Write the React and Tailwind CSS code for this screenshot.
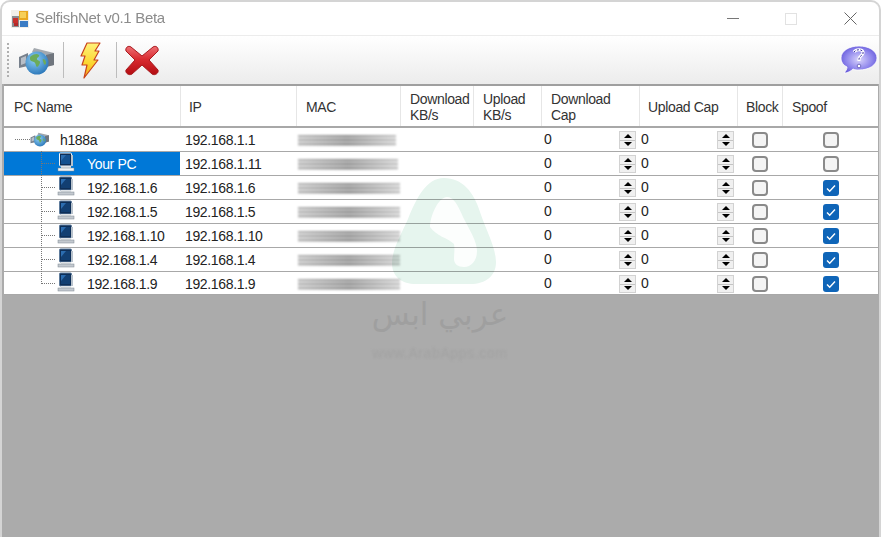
const columns = "grid grid-cols-[176px_116px_104px_73px_68px_98px_98px_45px_1fr]";

const devices = [
  { name: "Your PC", ip: "192.168.1.11", mac: "w-[100px]", spoof: false, selected: true },
  { name: "192.168.1.6", ip: "192.168.1.6", mac: "w-[102px]", spoof: true },
  { name: "192.168.1.5", ip: "192.168.1.5", mac: "w-[104px]", spoof: true },
  { name: "192.168.1.10", ip: "192.168.1.10", mac: "w-[104px]", spoof: true },
  { name: "192.168.1.4", ip: "192.168.1.4", mac: "w-[105px]", spoof: true },
  { name: "192.168.1.9", ip: "192.168.1.9", mac: "w-[106px]", spoof: true, last: true },
];

function AppIcon() {
  return (
    <svg width="18" height="18" viewBox="0 0 18 18" className="shrink-0">
      <rect x="0" y="0" width="18" height="18" fill="#f2efe9" />
      <rect x="1" y="6" width="7" height="11" fill="#8a8d92" />
      <rect x="2" y="8" width="5" height="5" fill="#c9302c" />
      <rect x="3" y="13" width="4" height="3" fill="#b32a2a" />
      <rect x="8" y="1" width="9" height="9" fill="#e9a820" />
      <rect x="9" y="2" width="6" height="6" fill="#f6cf58" />
      <rect x="9" y="11" width="8" height="6" fill="#3b7cc4" />
    </svg>
  );
}

function GlobeIcon({ size = 38, height = 28 }) {
  return (
    <svg width={size} height={height} viewBox="0 0 38 28" className="shrink-0">
      <defs>
        <radialGradient id="sea" cx="0.4" cy="0.35" r="0.8">
          <stop offset="0" stopColor="#8fd0f5" />
          <stop offset="1" stopColor="#1a68b0" />
        </radialGradient>
      </defs>
      <path d="M1 10l9-4v13l-9 2z" fill="#77808c" />
      <path d="M3 11l5-2v7l-5 2z" fill="#b7bec7" />
      <path d="M16 1l20 5v12l-8 2V8L14 5z" fill="#a3a8ae" />
      <path d="M28 8l8-2v12l-8 2z" fill="#6f757d" />
      <circle cx="19" cy="16" r="11.5" fill="url(#sea)" />
      <path d="M13 9c3-2 6-3 8-1 1 2-2 2-2 4s3 1 3 3-2 5-3 5-1-4-3-5-4-1-4-3 0-2 1-3z" fill="#6cab5a" />
      <path d="M25 12c2 0 3 2 3 4s-2 2-2 1-2-4-1-5z" fill="#6cab5a" />
    </svg>
  );
}

function BoltIcon() {
  return (
    <svg width="21" height="37" viewBox="0 0 21 37" className="shrink-0">
      <defs>
        <linearGradient id="bolt" x1="0" y1="0" x2="0" y2="1">
          <stop offset="0" stopColor="#fff27a" />
          <stop offset="0.6" stopColor="#fbd52e" />
          <stop offset="1" stopColor="#f6a11c" />
        </linearGradient>
      </defs>
      <path d="M7 1h13l-5 8 4 0-5 9 4 0L4 36l3-13-5 0 3-9-4 0z" fill="url(#bolt)" stroke="#c8431c" strokeWidth="1.2" strokeLinejoin="round" />
    </svg>
  );
}

function CloseIcon() {
  return (
    <svg width="36" height="36" viewBox="0 0 36 36" className="shrink-0">
      <defs>
        <linearGradient id="cross" x1="0" y1="0" x2="0" y2="1">
          <stop offset="0" stopColor="#ee6f74" />
          <stop offset="0.45" stopColor="#d92b30" />
          <stop offset="1" stopColor="#b30d12" />
        </linearGradient>
      </defs>
      <path d="M7 5l11 9 11-9c3-2 6 1 5 4l-9 9 9 10c1 3-3 6-6 4l-10-9-10 9c-3 2-7-1-6-4l9-10-9-9C1 6 4 3 7 5z" fill="url(#cross)" stroke="#a81a1e" strokeWidth="1" />
    </svg>
  );
}

function HelpIcon() {
  return (
    <svg width="38" height="30" viewBox="0 0 38 30" className="shrink-0">
      <defs>
        <radialGradient id="bubble" cx="0.5" cy="0.5" r="0.6">
          <stop offset="0" stopColor="#d9d4fb" />
          <stop offset="0.6" stopColor="#8f86ec" />
          <stop offset="1" stopColor="#5d50d6" />
        </radialGradient>
      </defs>
      <path d="M19 1c10 0 18 5 18 12s-8 12-18 12c-2 0-4 0-6-1-2 2-5 4-9 4 2-2 3-4 3-6-4-2-6-5-6-9C1 6 9 1 19 1z" fill="url(#bubble)" stroke="#fff" strokeWidth="0.8" />
      <path d="M14 7c2-3 8-3 9 0 1 3-4 4-4 7v2" fill="none" stroke="#fff" strokeWidth="3" />
      <path d="M14 7c2-3 8-3 9 0 1 3-4 4-4 7v2" fill="none" stroke="#3b2f9c" strokeWidth="1" strokeDasharray="2 1.5" />
      <circle cx="19" cy="21" r="1.8" fill="#fff" stroke="#3b2f9c" strokeWidth="0.6" />
    </svg>
  );
}

function PcIcon({ selected }) {
  return (
    <svg width="18" height="20" viewBox="0 0 18 20" className="shrink-0">
      <rect x="2.5" y="1" width="12" height="13" rx="1" fill="#0e2f58" stroke={selected ? "#f1f5fa" : "#5f7c9c"} />
      <rect x="4" y="3" width="9" height="9" fill={selected ? "#14508f" : "#123f72"} />
      <path d="M4 3h5L4 9z" fill="#2c6db0" />
      <rect x="14" y="3" width="2" height="11" fill="#b8c2cc" />
      <rect x="4" y="14" width="10" height="2" fill="#dfe3e7" />
      <rect x="1" y="16" width="16" height="3" fill={selected ? "#f1f4f7" : "#c3c9cf"} stroke="#7d8790" strokeWidth="0.5" />
    </svg>
  );
}

function Spinner() {
  return (
    <div className="flex h-[18px] w-[17px] shrink-0 flex-col justify-center gap-px border border-[#d2d2d2] bg-[#c4c4c4]">
      <div className="flex h-2 items-center justify-center bg-[#f0f0f0]">
        <div className="h-0 w-0 border-x-[4px] border-b-[4px] border-x-transparent border-b-black" />
      </div>
      <div className="flex h-2 items-center justify-center bg-[#f0f0f0]">
        <div className="h-0 w-0 border-x-[4px] border-t-[4px] border-x-transparent border-t-black" />
      </div>
    </div>
  );
}

function CapCell({ padLeft }) {
  return (
    <div className={"flex h-full items-start justify-between pr-[3px] " + padLeft}>
      <span className="mt-[2px] leading-[18px]">0</span>
      <div className="mt-[3px]">
        <Spinner />
      </div>
    </div>
  );
}

function Check({ checked }) {
  if (checked) {
    return (
      <div className="flex h-4 w-4 items-center justify-center rounded-[3px] bg-[#0f65b8]">
        <svg width="12" height="12" viewBox="0 0 12 12">
          <path d="M2 6.5l2.7 2.7L10 3.5" fill="none" stroke="#fff" strokeWidth="1.4" />
        </svg>
      </div>
    );
  }
  return <div className="h-4 w-4 rounded-[4px] border-2 border-[#8a8a8a] bg-[#f4f4f4]" />;
}

function BoxCell({ checked, className = "" }) {
  return (
    <div className={"flex h-full items-center justify-center pt-px " + className}>
      <Check checked={checked} />
    </div>
  );
}

function HeaderCell({ children, className = "" }) {
  return (
    <div className={"flex h-full items-center border-l border-[#e6e6e6] pt-[2px] leading-[16px] " + className}>
      {children}
    </div>
  );
}

function MacBlur({ width }) {
  return (
    <div className={"h-[11px] bg-gradient-to-r from-[#d6d6d6] via-[#a8a8a8] to-[#e4e4e4] blur-[1px] " + width}>
      <div className="h-full bg-[repeating-linear-gradient(180deg,#00000028_0px,#00000028_2px,#ffffff40_2px,#ffffff40_4px)]" />
    </div>
  );
}

function DeviceRow({ device }) {
  const { name, ip, mac, spoof, selected, last } = device;
  return (
    <div className={columns + " items-stretch border-b border-[#a8a8a8] text-[#222] " + (last ? "h-[23px]" : "h-6")}>
      <div className={"relative flex items-center pl-[53px] " + (selected ? "bg-[#0078d7] text-white" : "")}>
        <div className={"absolute left-[37px] top-[-1px] w-0 border-l border-dotted border-[#777] " + (last ? "h-[13px]" : "h-[25px]")} />
        <div className="absolute left-[37px] top-[11px] h-0 w-[14px] border-t border-dotted border-[#777]" />
        <div className="mb-[3px]">
          <PcIcon selected={selected} />
        </div>
        <span className="ml-[12px] pt-px">{name}</span>
      </div>
      <div className="flex items-center pl-[5px] pt-px">{ip}</div>
      <div className="flex items-center pl-[2px] pt-[2px]">
        <MacBlur width={mac} />
      </div>
      <div />
      <div />
      <CapCell padLeft="pl-[3px]" />
      <CapCell padLeft="pl-[2px]" />
      <BoxCell checked={false} />
      <BoxCell checked={spoof} className="pl-[2px]" />
    </div>
  );
}

function RootRow() {
  return (
    <div className={columns + " h-6 items-stretch border-b border-[#a8a8a8] text-[#222]"}>
      <div className="flex items-center pl-[11px]">
        <div className="h-0 w-[15px] shrink-0 border-t border-dotted border-[#777]" />
        <GlobeIcon size={20} height={15} />
        <span className="ml-[10px] pt-px">h188a</span>
      </div>
      <div className="flex items-center pl-[5px] pt-px">192.168.1.1</div>
      <div className="flex items-center pl-[2px] pt-[2px]">
        <MacBlur width="w-[98px]" />
      </div>
      <div />
      <div />
      <CapCell padLeft="pl-[3px]" />
      <CapCell padLeft="pl-[2px]" />
      <BoxCell checked={false} />
      <BoxCell checked={false} className="pl-[2px]" />
    </div>
  );
}

function Watermark() {
  return (
    <div className="pointer-events-none absolute left-[370px] top-[175px] flex w-[136px] flex-col items-center">
      <svg width="104" height="108" viewBox="0 0 104 108" className="ml-[20px] self-start mix-blend-multiply">
        <path d="M52 1c18 0 30 14 36 34 6 18 16 36 16 50 0 14-10 22-26 22H24C10 107 0 100 0 86c0-14 10-30 16-44C24 22 34 1 52 1z" fill="#e6f5ee" />
        <path d="M55 20c6 0 10 6 16 20 6 12 14 24 14 34 0 10-6 16-13 16-6 0-10-3-10-8 0-6 1-10 0-15-6-6-18-8-24-17 0-10 8-30 17-30z" fill="#fcfefd" />
      </svg>
      <span dir="rtl" className="mt-[9px] whitespace-nowrap font-['DejaVu_Sans',sans-serif] text-[31px] leading-[40px] tracking-normal text-[#9f9f9f]">عربي ابس</span>
      <span className="mt-[12px] whitespace-nowrap text-[14px] leading-[14px] tracking-[0.6px] text-[#a2a2a2] blur-[1px]">www.ArabApps.com</span>
    </div>
  );
}

export default function App() {
  return (
    <div className="relative flex h-[537px] w-[881px] flex-col overflow-hidden rounded-t-[10px] border-2 border-b-0 border-[#d4d4d4] bg-white font-['Liberation_Sans',Arial,sans-serif] text-[14px] tracking-[-0.35px]">
      <div className="flex h-[34px] shrink-0 items-center border-b border-[#ececec] pl-[9px]">
        <AppIcon />
        <span className="ml-[6px] text-[15px] tracking-[-0.3px] text-[#8c8c8c]">SelfishNet v0.1 Beta</span>
        <div className="ml-auto flex items-center pr-[22px]">
          <div className="h-px w-3 bg-[#777]" />
          <div className="ml-[46px] h-3 w-3 border border-[#e2e2e2]" />
          <svg width="13" height="13" viewBox="0 0 13 13" className="ml-[47px]">
            <path d="M0.5 0.5l12 12M12.5 0.5l-12 12" stroke="#666" strokeWidth="1" />
          </svg>
        </div>
      </div>

      <div className="flex h-[48px] shrink-0 items-center bg-gradient-to-b from-white to-[#ececec] pl-[5px] pr-[1px]">
        <div className="h-[34px] w-[3px] shrink-0 border-l-2 border-dotted border-[#b0b0b0]" />
        <div className="ml-[8px] mt-[2px]"><GlobeIcon /></div>
        <div className="ml-[7px] h-[36px] w-px bg-[#bdbdbd]" />
        <div className="ml-[16px]"><BoltIcon /></div>
        <div className="ml-[15px] h-[36px] w-px bg-[#bdbdbd]" />
        <div className="ml-[7px]"><CloseIcon /></div>
        <div className="ml-auto"><HelpIcon /></div>
      </div>

      <div className="flex flex-1 flex-col bg-[#ababab] pl-[2px] pr-px">
        <div className="border-t-[2px] border-[#9f9f9f] bg-white">
          <div className={columns + " h-[42px] items-center border-b-2 border-[#a8a8a8] text-[#333]"}>
            <HeaderCell className="border-l-0 pl-[10px]">PC Name</HeaderCell>
            <HeaderCell className="pl-[8px]">IP</HeaderCell>
            <HeaderCell className="pl-[9px]">MAC</HeaderCell>
            <HeaderCell className="pl-[9px]">Download<br />KB/s</HeaderCell>
            <HeaderCell className="pl-[9px]">Upload<br />KB/s</HeaderCell>
            <HeaderCell className="pl-[9px]">Download<br />Cap</HeaderCell>
            <HeaderCell className="pl-[8px]">Upload Cap</HeaderCell>
            <HeaderCell className="pl-[8px]">Block</HeaderCell>
            <HeaderCell className="pl-[9px]">Spoof</HeaderCell>
          </div>
          <RootRow />
          {devices.map((device) => (
            <DeviceRow key={device.ip} device={device} />
          ))}
        </div>
      </div>

      <Watermark />
    </div>
  );
}
